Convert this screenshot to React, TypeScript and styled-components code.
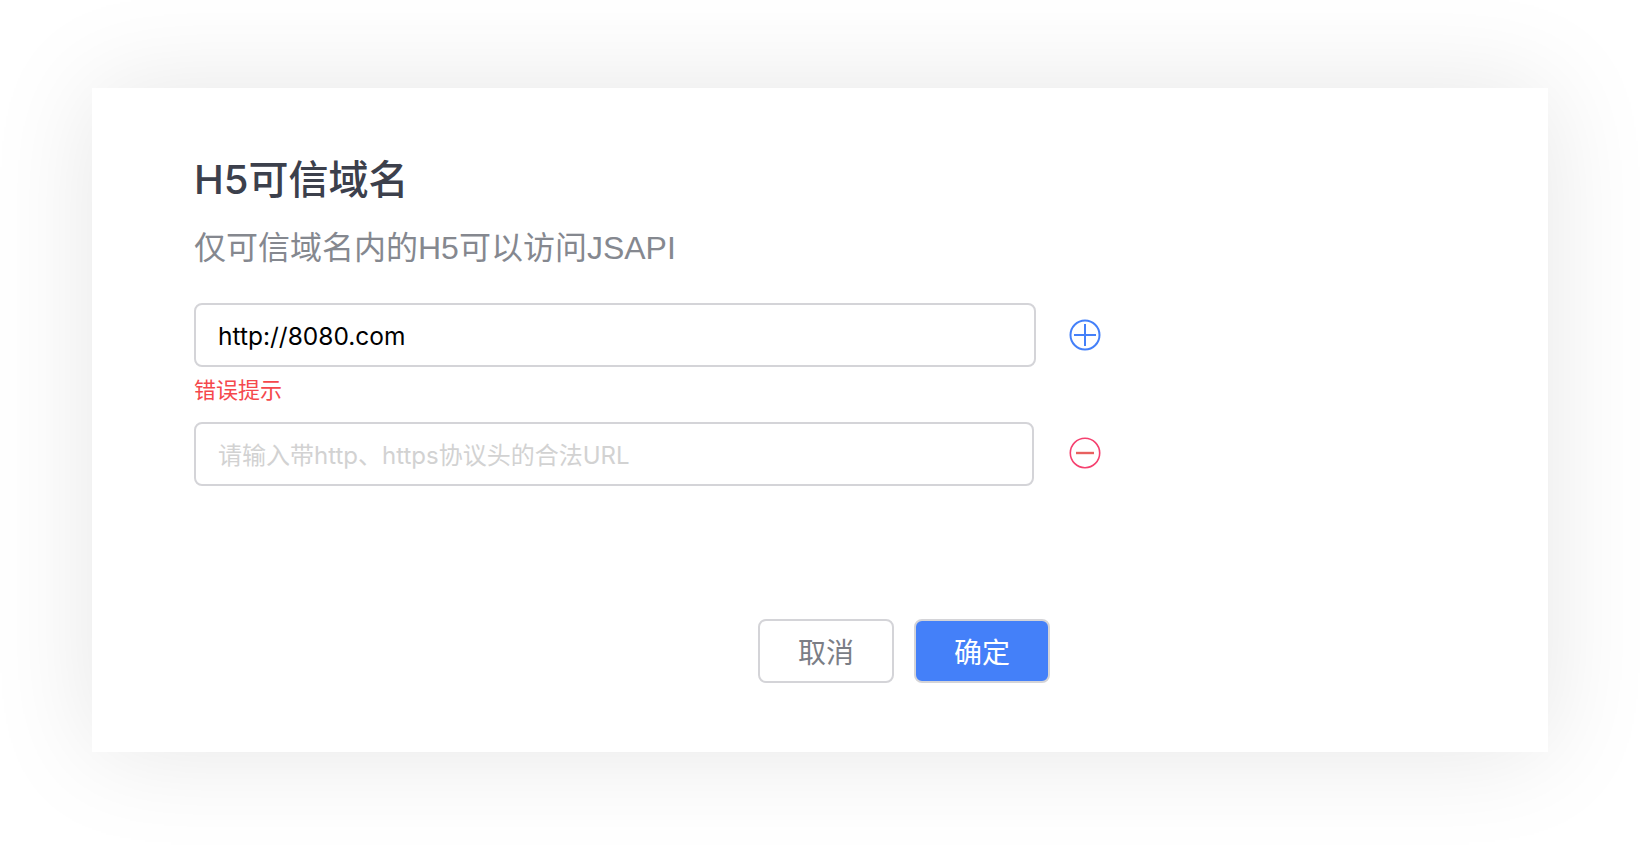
import styled, { createGlobalStyle } from "styled-components"

const GlobalStyle = createGlobalStyle`
    html, body {
        margin: 0;
        background: #fff;
    }
    body {
        font-family: "Liberation Sans", "Noto Sans CJK SC", sans-serif;
    }
`

function PlusIcon() {
    return (
        <svg width="32" height="32" viewBox="0 0 32 32" fill="none">
            <circle cx="16" cy="16" r="14.5" stroke="#4480f9" strokeWidth="2" />
            <path d="M5 16h22M16 5v22" stroke="#4480f9" strokeWidth="2" />
        </svg>
    )
}

function MinusIcon() {
    return (
        <svg width="32" height="32" viewBox="0 0 32 32" fill="none">
            <circle cx="16" cy="16" r="14.7" stroke="#f5406f" strokeWidth="1.6" />
            <path d="M7 16h18" stroke="#e8605f" strokeWidth="2.4" />
        </svg>
    )
}

export default function App() {
    return (
        <>
            <GlobalStyle />
            <Page>
                <Card>
                    <Title>H5可信域名</Title>
                    <Subtitle>仅可信域名内的H5可以访问JSAPI</Subtitle>
                    <Row>
                        <Field $width={842} defaultValue="http://8080.com" />
                        <IconButton $gap={33}><PlusIcon /></IconButton>
                    </Row>
                    <ErrorTip>错误提示</ErrorTip>
                    <Row>
                        <Field $width={840} placeholder="请输入带http、https协议头的合法URL" />
                        <IconButton $gap={35} $lift={1}><MinusIcon /></IconButton>
                    </Row>
                    <Footer>
                        <Button $width={136}>取消</Button>
                        <Button $width={136} $primary>确定</Button>
                    </Footer>
                </Card>
            </Page>
        </>
    )
}

const Page = styled.div`
    width: 1640px;
    height: 848px;
    padding: 88px 92px 96px;
    box-sizing: border-box;
    overflow: hidden;
`

const Card = styled.section`
    height: 664px;
    box-sizing: border-box;
    padding: 66px 102px 0;
    background: #fff;
    box-shadow: 0 0 100px rgba(0, 0, 0, 0.1);
    display: flex;
    flex-direction: column;
`

const Title = styled.h1`
    margin: 0;
    font-family: Inter, "Noto Sans CJK SC", sans-serif;
    font-size: 40px;
    line-height: 52px;
    font-weight: 500;
    color: #3c404c;
`

const Subtitle = styled.p`
    margin: 20px 0 0;
    font-size: 32px;
    line-height: 44px;
    color: #85888f;
`

const Row = styled.div`
    display: flex;
    align-items: center;
    &:first-of-type {
        margin-top: 33px;
    }
`

const Field = styled.input<{ $width: number }>`
    width: ${(p) => p.$width}px;
    height: 64px;
    box-sizing: border-box;
    padding: 1px 22px 0;
    border: 2px solid #d4d4d8;
    border-radius: 8px;
    outline: none;
    background: #fff;
    font-family: Inter, "Noto Sans CJK SC", sans-serif;
    font-size: 24.5px;
    color: #000;

    &::placeholder {
        font-size: 24px;
        color: #d2d2d2;
    }
`

const IconButton = styled.span<{ $gap: number; $lift?: number }>`
    display: flex;
    margin-left: ${(p) => p.$gap}px;
    margin-bottom: ${(p) => (p.$lift ?? 0) * 2}px;
`

const ErrorTip = styled.div`
    height: 55px;
    padding-top: 9px;
    box-sizing: border-box;
    font-size: 22px;
    line-height: 30px;
    color: #f5484c;
`

const Footer = styled.div`
    display: flex;
    gap: 20px;
    margin-top: 133px;
    padding-left: 564px;
`

const Button = styled.button<{ $primary?: boolean; $width: number }>`
    width: ${(p) => p.$width}px;
    height: 64px;
    padding: 0;
    box-sizing: border-box;
    border: 2px solid #d4d4d8;
    border-radius: 8px;
    background: ${(p) => (p.$primary ? "#4480f9" : "#fff")};
    color: ${(p) => (p.$primary ? "#fff" : "#7b7e86")};
    font-family: inherit;
    font-size: 28px;
`
